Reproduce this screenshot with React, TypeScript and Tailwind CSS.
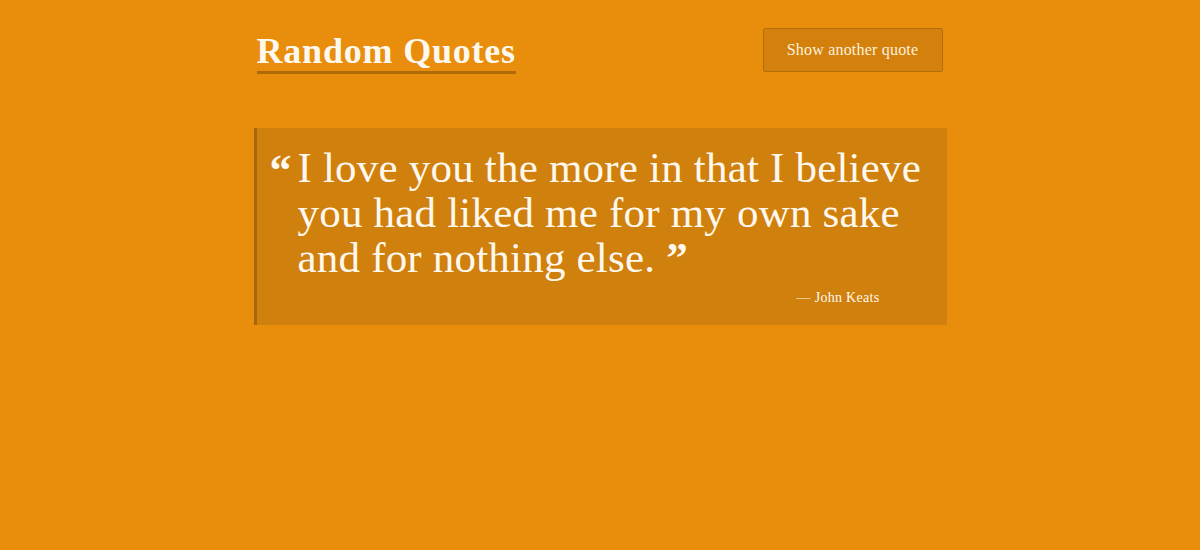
import React from 'react';

const quote = {
  text: 'I love you the more in that I believe you had liked me for my own sake and for nothing else.',
  author: 'John Keats',
};

export default function App() {
  return (
    <div className="min-h-[550px] w-full bg-[#e88e0c] text-[#fff8ee]" style={{ fontFamily: '"Liberation Serif", serif' }}>
      <div className="mx-auto w-[693px]">
        <header className="flex items-start justify-between pt-[28px] pl-[3px] pr-[4px]">
          <h1 className="mt-[3px] border-b-[3px] border-[#b06a0a] text-[36px] font-bold leading-[40px] tracking-[0.8px]">
            Random Quotes
          </h1>
          <button className="h-[44px] w-[180px] rounded-[2px] border border-[#b36d0a] bg-[#d4800c] text-[16px] tracking-[0.2px] text-[#fdf0dc]">
            Show another quote
          </button>
        </header>

        <blockquote className="mt-[54px] rounded-r-[2px] border-l-[3px] border-[#a86708] bg-[#d0800c] pt-[17px] pb-[17px] pl-[13px] pr-[16px]">
          <div className="flex gap-[6px]">
            <span className="mt-[6px] text-[44px] font-bold leading-[40px]">“</span>
            <p className="w-[632px] text-[43px] leading-[45px] tracking-[0.2px]">
              {quote.text} <b className="font-bold">”</b>
            </p>
          </div>
          <div className="mt-[8px] flex justify-end pr-[51px] text-[14px] leading-[20px] tracking-[0.3px]">
            — {quote.author}
          </div>
        </blockquote>
      </div>
    </div>
  );
}
